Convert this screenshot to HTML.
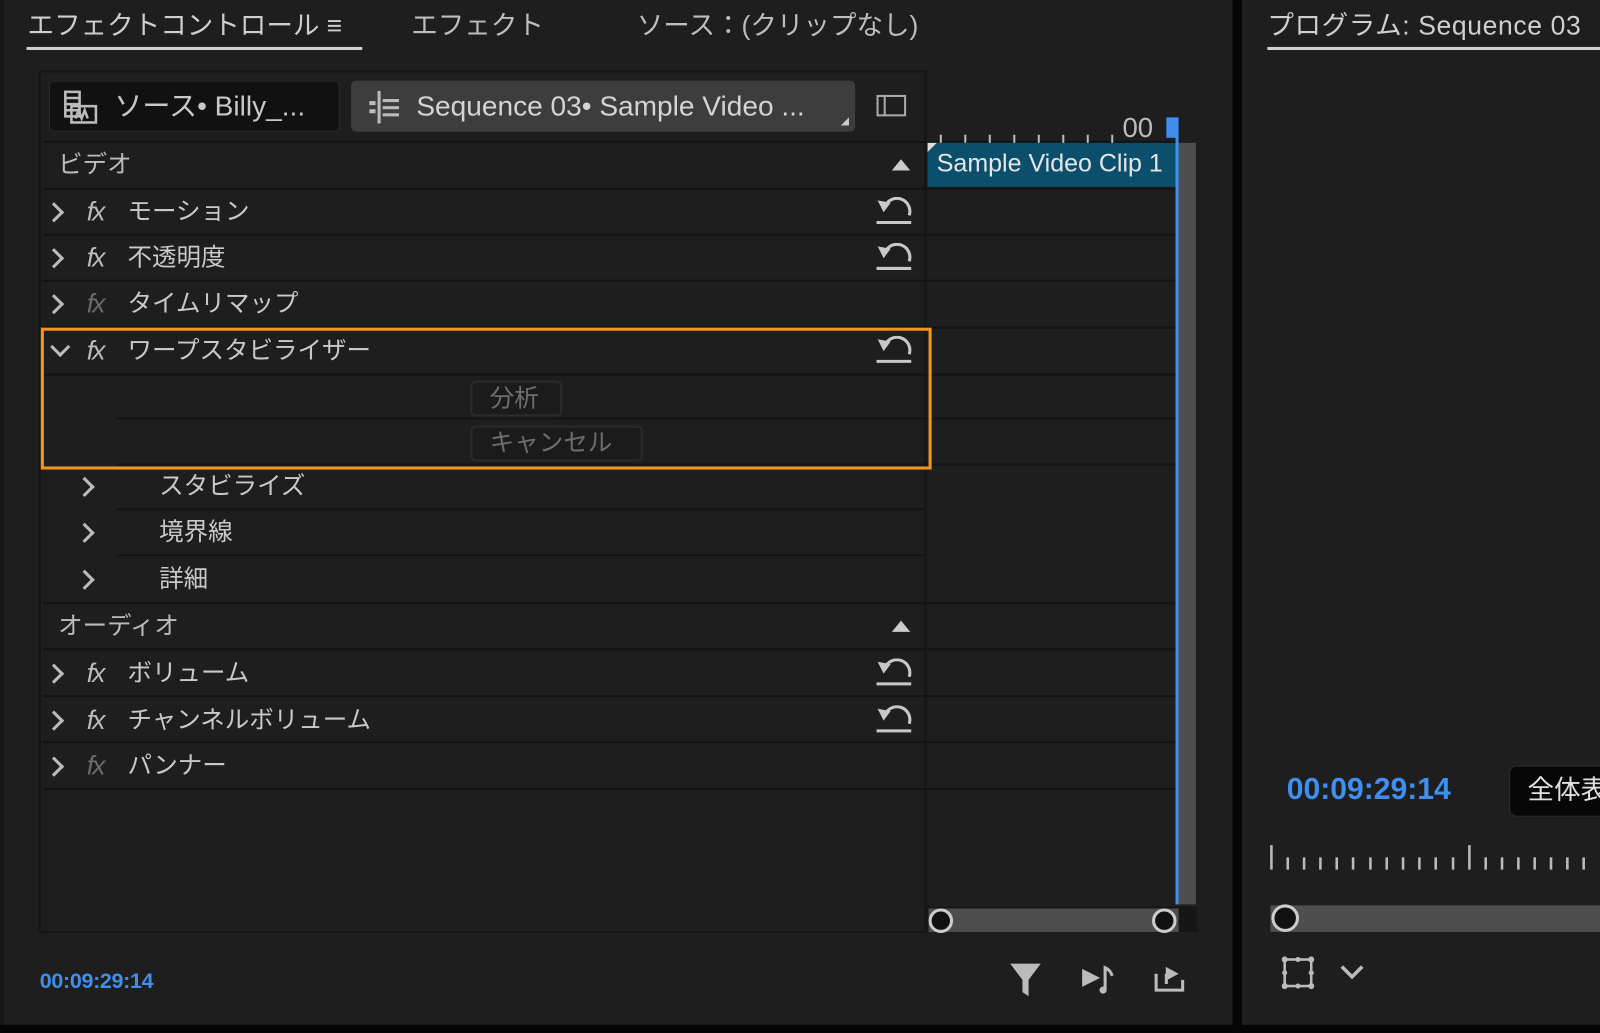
<!DOCTYPE html>
<html><head><meta charset="utf-8">
<style>
html,body{margin:0;padding:0;background:#000;width:1600px;height:1033px;overflow:hidden}
#s{position:absolute;left:0;top:0;width:1568px;height:1012px;transform:scale(1.02041,1.02075);transform-origin:0 0;background:#1e1e1e;font-family:"Liberation Sans","Noto Sans CJK JP",sans-serif;color:#c9c9c9}
.a{position:absolute}
.t{position:absolute;font-size:25px;line-height:30px;white-space:nowrap}
.r{font-size:24px}
.hl{position:absolute;height:2px;background:#131313}
.fx{position:absolute;font-family:"Liberation Sans",sans-serif;font-style:italic;font-size:26px;color:#bbb;line-height:30px;letter-spacing:-2px}
.chev{position:absolute;width:11px;height:11px;border-right:3px solid #bbb;border-bottom:3px solid #bbb;transform:rotate(-45deg)}
</style></head><body>
<div id="s">
<div class="a" style="left:0;top:0;width:4px;height:1012px;background:#161616"></div>
<div class="a" style="left:1208px;top:0;width:9px;height:1012px;background:#050505"></div>
<div class="a" style="left:0;top:1004px;width:1568px;height:8px;background:#050505"></div>

<div class="t" style="left:27px;top:10px;font-size:26px;color:#cfcfcf">エフェクトコントロール <span style="font-size:26px">≡</span></div>
<div class="a" style="left:26px;top:46px;width:329px;height:3px;background:#cfcfcf"></div>
<div class="t" style="left:403px;top:10px;font-size:26px;color:#bdbdbd">エフェクト</div>
<div class="t" style="left:624px;top:10px;font-size:26px;color:#bdbdbd">ソース：(クリップなし)</div>
<div class="t" style="left:1242px;top:10px;font-size:26px;color:#cfcfcf;letter-spacing:0.6px">プログラム: Sequence 03</div>
<div class="a" style="left:1242px;top:46px;width:326px;height:3px;background:#cfcfcf"></div>

<div class="a" style="left:38px;top:69px;width:870px;height:845px;border:2px solid #151515;box-sizing:border-box;background:#1e1e1e"></div>
<div class="a" style="left:48px;top:79px;width:285px;height:50px;background:#111;border-radius:5px;border:1px solid #2a2a2a;box-sizing:border-box"></div>
<svg class="a" style="left:62px;top:88px" width="34" height="34" viewBox="0 0 34 34" fill="none" stroke="#bbb" stroke-width="2.5"><rect x="2" y="2" width="14" height="24"/><line x1="2" y1="8" x2="16" y2="8"/><line x1="2" y1="14" x2="16" y2="14"/><line x1="2" y1="20" x2="16" y2="20"/><rect x="8" y="16" width="24" height="16"/><path d="M12 28 l3 -8 3 8 3 -8 3 8"/></svg>
<div class="t" style="left:112px;top:89px;font-size:27.5px;color:#c8c8c8">ソース• Billy_...</div>
<div class="a" style="left:344px;top:79px;width:494px;height:50px;background:#3d3d3d;border-radius:5px"></div>
<svg class="a" style="left:360px;top:89px" width="34" height="32" viewBox="0 0 34 32" fill="#bbb"><rect x="10" y="0" width="3" height="32"/><rect x="2" y="10" width="6" height="4"/><rect x="2" y="18" width="6" height="4"/><rect x="15" y="8" width="16" height="3"/><rect x="15" y="15" width="16" height="3"/><rect x="15" y="22" width="16" height="3"/></svg>
<div class="t" style="left:408px;top:89px;font-size:27.5px;color:#d4d4d4">Sequence 03• Sample Video ...</div>
<div class="a" style="left:824px;top:115px;width:0;height:0;border-left:8px solid transparent;border-bottom:8px solid #ccc"></div>
<div class="a" style="left:859px;top:93px;width:29px;height:21px;border:2px solid #aaa;box-sizing:border-box"></div>
<div class="a" style="left:866px;top:93px;width:2px;height:21px;background:#aaa"></div>
<div class="a" style="left:906px;top:70px;width:2px;height:843px;background:#151515"></div>

<div class="hl" style="left:42px;top:138px;width:1111px"></div>
<div class="hl" style="left:42px;top:184px;width:1111px"></div>
<div class="hl" style="left:42px;top:229px;width:1111px"></div>
<div class="hl" style="left:42px;top:274px;width:1111px"></div>
<div class="hl" style="left:42px;top:320px;width:1111px"></div>
<div class="hl" style="left:42px;top:366px;width:1111px"></div>
<div class="hl" style="left:115px;top:409px;width:1038px"></div>
<div class="hl" style="left:115px;top:454px;width:1038px"></div>
<div class="hl" style="left:115px;top:498px;width:791px"></div>
<div class="hl" style="left:115px;top:543px;width:791px"></div>
<div class="hl" style="left:42px;top:590px;width:1111px"></div>
<div class="hl" style="left:42px;top:635px;width:1111px"></div>
<div class="hl" style="left:42px;top:681px;width:1111px"></div>
<div class="hl" style="left:42px;top:726px;width:1111px"></div>
<div class="hl" style="left:42px;top:772px;width:1111px"></div>

<div class="t r" style="left:57px;top:147px;color:#bcbcbc">ビデオ</div>
<div class="a" style="left:874px;top:156px;border-left:9px solid transparent;border-right:9px solid transparent;border-bottom:11px solid #ccc;width:0;height:0"></div>
<div class="t r" style="left:57px;top:599px;color:#bcbcbc">オーディオ</div>
<div class="a" style="left:874px;top:608px;border-left:9px solid transparent;border-right:9px solid transparent;border-bottom:11px solid #ccc;width:0;height:0"></div>

<div class="chev" style="left:46px;top:201px"></div><div class="fx" style="left:85px;top:192px">fx</div><div class="t r" style="left:125px;top:193px">モーション</div>
<div class="chev" style="left:46px;top:246px"></div><div class="fx" style="left:85px;top:237px">fx</div><div class="t r" style="left:125px;top:238px">不透明度</div>
<div class="chev" style="left:46px;top:291px"></div><div class="fx" style="left:85px;top:282px;color:#6a6a6a">fx</div><div class="t r" style="left:125px;top:283px">タイムリマップ</div>
<div class="chev" style="left:52px;top:333px;transform:rotate(45deg)"></div><div class="fx" style="left:85px;top:328px">fx</div><div class="t r" style="left:125px;top:329px">ワープスタビライザー</div>
<div class="a" style="left:461px;top:373px;width:90px;height:35px;border:2px solid #2b2b2b;border-radius:5px;box-sizing:border-box;background:#1b1b1b"></div>
<div class="t r" style="left:480px;top:376px;color:#6e6e6e">分析</div>
<div class="a" style="left:461px;top:417px;width:169px;height:35px;border:2px solid #2b2b2b;border-radius:5px;box-sizing:border-box;background:#1b1b1b"></div>
<div class="t r" style="left:480px;top:420px;color:#6e6e6e">キャンセル</div>
<div class="chev" style="left:76px;top:470px"></div><div class="t r" style="left:156px;top:462px">スタビライズ</div>
<div class="chev" style="left:76px;top:515px"></div><div class="t r" style="left:156px;top:507px">境界線</div>
<div class="chev" style="left:76px;top:561px"></div><div class="t r" style="left:156px;top:553px">詳細</div>
<div class="chev" style="left:46px;top:653px"></div><div class="fx" style="left:85px;top:644px">fx</div><div class="t r" style="left:125px;top:645px">ボリューム</div>
<div class="chev" style="left:46px;top:699px"></div><div class="fx" style="left:85px;top:690px">fx</div><div class="t r" style="left:125px;top:691px">チャンネルボリューム</div>
<div class="chev" style="left:46px;top:744px"></div><div class="fx" style="left:85px;top:735px;color:#6a6a6a">fx</div><div class="t r" style="left:125px;top:736px">パンナー</div>

<svg class="a" style="left:857px;top:193px" width="38" height="28" viewBox="0 0 38 28" fill="none" stroke="#c8c8c8" stroke-width="3"><path d="M34 18 A12 12 0 0 0 10 10"/><path d="M4 4 L9 14 L15 6 Z" fill="#c8c8c8" stroke-width="1"/><line x1="2" y1="25" x2="36" y2="25"/></svg>
<svg class="a" style="left:857px;top:238px" width="38" height="28" viewBox="0 0 38 28" fill="none" stroke="#c8c8c8" stroke-width="3"><path d="M34 18 A12 12 0 0 0 10 10"/><path d="M4 4 L9 14 L15 6 Z" fill="#c8c8c8" stroke-width="1"/><line x1="2" y1="25" x2="36" y2="25"/></svg>
<svg class="a" style="left:857px;top:329px" width="38" height="28" viewBox="0 0 38 28" fill="none" stroke="#c8c8c8" stroke-width="3"><path d="M34 18 A12 12 0 0 0 10 10"/><path d="M4 4 L9 14 L15 6 Z" fill="#c8c8c8" stroke-width="1"/><line x1="2" y1="25" x2="36" y2="25"/></svg>
<svg class="a" style="left:857px;top:645px" width="38" height="28" viewBox="0 0 38 28" fill="none" stroke="#c8c8c8" stroke-width="3"><path d="M34 18 A12 12 0 0 0 10 10"/><path d="M4 4 L9 14 L15 6 Z" fill="#c8c8c8" stroke-width="1"/><line x1="2" y1="25" x2="36" y2="25"/></svg>
<svg class="a" style="left:857px;top:691px" width="38" height="28" viewBox="0 0 38 28" fill="none" stroke="#c8c8c8" stroke-width="3"><path d="M34 18 A12 12 0 0 0 10 10"/><path d="M4 4 L9 14 L15 6 Z" fill="#c8c8c8" stroke-width="1"/><line x1="2" y1="25" x2="36" y2="25"/></svg>

<div class="a" style="left:40px;top:321px;width:873px;height:139px;border:3px solid #f0961e;box-sizing:border-box"></div>

<svg class="a" style="left:908px;top:112px" width="250" height="30"><g stroke="#bbb" stroke-width="2"><line x1="14" y1="20" x2="14" y2="28"/><line x1="38" y1="20" x2="38" y2="28"/><line x1="62" y1="20" x2="62" y2="28"/><line x1="86" y1="20" x2="86" y2="28"/><line x1="110" y1="20" x2="110" y2="28"/><line x1="134" y1="20" x2="134" y2="28"/><line x1="158" y1="20" x2="158" y2="28"/><line x1="182" y1="20" x2="182" y2="28"/></g></svg>
<div class="t" style="left:1100px;top:110px;font-size:27px;color:#bbb">00</div>
<div class="a" style="left:909px;top:140px;width:244px;height:43px;background:#0b4f6c"></div>
<div class="a" style="left:909px;top:140px;border-right:9px solid transparent;border-top:9px solid #ddd;width:0;height:0"></div>
<div class="t" style="left:918px;top:146px;font-size:24.5px;color:#e6e6e6">Sample Video Clip 1</div>
<div class="a" style="left:1155px;top:140px;width:17px;height:746px;background:#4e4e4e"></div>
<div class="a" style="left:1152px;top:115px;width:3px;height:771px;background:#3f8fef"></div>
<div class="a" style="left:1143px;top:115px;width:11px;height:20px;background:#3f8fef"></div>
<div class="a" style="left:908px;top:888px;width:265px;height:25px;background:#161616"></div>
<div class="a" style="left:910px;top:890px;width:245px;height:23px;background:#4e4e4e"></div>
<div class="a" style="left:910px;top:890px;width:24px;height:24px;border-radius:50%;background:#111;border:3px solid #ccc;box-sizing:border-box"></div>
<div class="a" style="left:1129px;top:890px;width:24px;height:24px;border-radius:50%;background:#111;border:3px solid #ccc;box-sizing:border-box"></div>

<div class="t" style="left:39px;top:947px;font-size:21px;font-weight:bold;color:#3f8fef;letter-spacing:-0.3px">00:09:29:14</div>
<svg class="a" style="left:988px;top:942px" width="34" height="36" viewBox="0 0 34 36" fill="#bbb"><path d="M2 2 H32 L20 18 V34 L14 30 V18 Z"/></svg>
<svg class="a" style="left:1058px;top:944px" width="38" height="32" viewBox="0 0 38 32" fill="#bbb" stroke="#bbb"><path d="M3 6 L19 14 L3 22 Z"/><path d="M25 26 V4 Q30 6 32 12" fill="none" stroke-width="3"/><circle cx="23" cy="26" r="3"/></svg>
<svg class="a" style="left:1130px;top:944px" width="32" height="30" viewBox="0 0 32 30" fill="none" stroke="#bbb" stroke-width="3"><path d="M3 10 V26 H29 V16"/><path d="M13 4 L24 10 L13 16 Z" fill="#bbb" stroke-width="1"/><path d="M13 10 V20" /></svg>

<div class="t" style="left:1261px;top:757px;font-size:29.5px;font-weight:bold;color:#3f8fef;line-height:34px">00:09:29:14</div>
<div class="a" style="left:1479px;top:750px;width:100px;height:48px;background:#070707;border:1px solid #2c2c2c;border-radius:7px"></div>
<div class="t" style="left:1497px;top:759px;font-size:26px;color:#e0e0e0">全体表</div>
<svg class="a" style="left:1240px;top:826px" width="328" height="30"><g stroke="#bbb" stroke-width="2.5"><line x1="6" y1="2" x2="6" y2="26"/><line x1="22" y1="14" x2="22" y2="26"/><line x1="38" y1="14" x2="38" y2="26"/><line x1="54" y1="14" x2="54" y2="26"/><line x1="70" y1="14" x2="70" y2="26"/><line x1="86" y1="14" x2="86" y2="26"/><line x1="103" y1="14" x2="103" y2="26"/><line x1="119" y1="14" x2="119" y2="26"/><line x1="135" y1="14" x2="135" y2="26"/><line x1="151" y1="14" x2="151" y2="26"/><line x1="167" y1="14" x2="167" y2="26"/><line x1="184" y1="14" x2="184" y2="26"/><line x1="200" y1="2" x2="200" y2="26"/><line x1="216" y1="14" x2="216" y2="26"/><line x1="232" y1="14" x2="232" y2="26"/><line x1="248" y1="14" x2="248" y2="26"/><line x1="264" y1="14" x2="264" y2="26"/><line x1="280" y1="14" x2="280" y2="26"/><line x1="296" y1="14" x2="296" y2="26"/><line x1="312" y1="14" x2="312" y2="26"/></g></svg>
<div class="a" style="left:1245px;top:887px;width:323px;height:26px;background:#4e4e4e"></div>
<div class="a" style="left:1246px;top:886px;width:27px;height:27px;border-radius:50%;background:#111;border:3px solid #ccc;box-sizing:border-box"></div>
<svg class="a" style="left:1256px;top:937px" width="32" height="32" viewBox="0 0 32 32" fill="#bbb"><rect x="3" y="3" width="26" height="26" fill="none" stroke="#bbb" stroke-width="2.5"/><circle cx="3" cy="3" r="3"/><circle cx="29" cy="3" r="3"/><circle cx="3" cy="29" r="3"/><circle cx="29" cy="29" r="3"/><circle cx="16" cy="3" r="2.5"/><circle cx="16" cy="29" r="2.5"/><circle cx="3" cy="16" r="2.5"/><circle cx="29" cy="16" r="2.5"/></svg>
<svg class="a" style="left:1313px;top:944px" width="24" height="16" viewBox="0 0 24 16" fill="none" stroke="#bbb" stroke-width="3.5"><path d="M2 3 L12 13 L22 3"/></svg>
</div>
</body></html>
